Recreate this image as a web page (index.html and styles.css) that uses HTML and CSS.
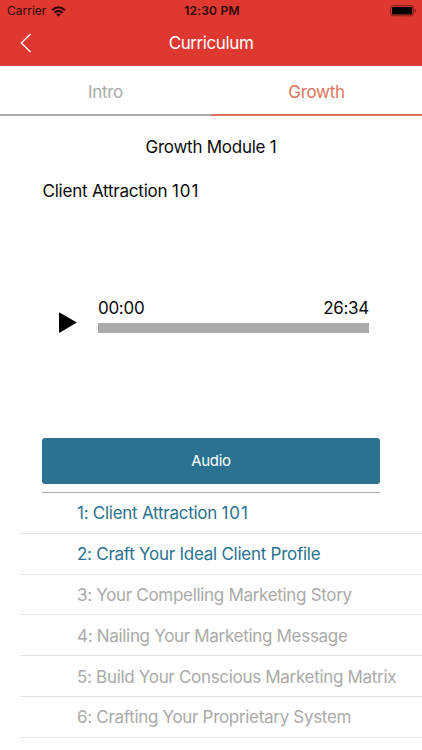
FILE: index.html
```html
<!DOCTYPE html>
<html lang="en">
<head>
<meta charset="utf-8">
<title>Curriculum</title>
<link rel="stylesheet" href="styles.css">
</head>
<body>
<header class="header">
  <div class="status">
    <div class="carrier"><span>Carrier</span>
      <svg width="15" height="11" viewBox="0 0 15 11" fill="none" stroke="#2a0807" stroke-width="2"><path d="M1 4.2Q7.5-1.7 14 4.2"/><path d="M3.4 6.7Q7.5 3 11.6 6.7"/><path d="M5.2 8.3Q7.5 6.5 9.8 8.3L7.5 10.7Z" fill="#2a0807" stroke="none"/></svg>
    </div>
    <span class="clock">12:30 PM</span>
    <svg class="battery" width="27" height="12" viewBox="0 0 27 12"><rect x=".6" y=".6" width="23" height="10.2" rx="2.4" fill="none" stroke="#7c1d1a"/><rect x="2" y="2" width="20.2" height="7.4" rx="1" fill="#000"/><path d="M25 4v3.6q1.3-.5 1.3-1.8T25 4Z" fill="#7c1d1a"/></svg>
  </div>
  <div class="nav">
    <svg class="back" width="12" height="20" viewBox="0 0 12 20" fill="none" stroke="#fff" stroke-width="1.3"><path d="M10.5 1L1.3 10l9.2 9"/></svg>
    <h1 class="title">Curriculum</h1>
  </div>
</header>
<nav class="tabs">
  <div class="tab"><span>Intro</span></div>
  <div class="tab active"><span>Growth</span></div>
</nav>
<main>
  <h2 class="module">Growth Module 1</h2>
  <p class="lesson">Client Attraction <span class="figures">101</span></p>
  <section class="player">
    <svg class="play" width="19" height="22" viewBox="0 0 19 22"><path d="M1 1.2Q1 .2 2 .8L18 9.9Q19 10.5 18 11.1L2 20.4Q1 21 1 20Z" fill="#000"/></svg>
    <div class="track">
      <div class="times"><span>00:00</span><span>26:34</span></div>
      <div class="bar"></div>
    </div>
  </section>
  <div class="audio"><span>Audio</span></div>
  <div class="rule"></div>
  <ol class="list">
    <li class="open"><span>1: Client Attraction <span class="figures">101</span></span></li>
    <li class="open"><span>2: Craft Your Ideal Client Profile</span></li>
    <li><span>3: Your Compelling Marketing Story</span></li>
    <li><span>4: Nailing Your Marketing Message</span></li>
    <li><span>5: Build Your Conscious Marketing Matrix</span></li>
    <li><span>6: Crafting Your Proprietary System</span></li>
  </ol>
</main>
</body>
</html>
```
FILE: styles.css
```css
* { box-sizing: border-box; }
body {
  margin: 0;
  height: 750px;
  overflow: hidden;
  background: #fff;
  color: #0a0a0a;
  font: 17px/22px Inter, "Liberation Sans", sans-serif;
  letter-spacing: -0.29px;
  white-space: nowrap;
}
h1, h2, p, ol { margin: 0; padding: 0; font-size: inherit; font-weight: 400; }
.header { height: 66px; background: #df3831; border-bottom: 1px solid #d2453f; }
.status {
  display: grid;
  grid-template-columns: 1fr auto 1fr;
  align-items: center;
  height: 22px;
  padding: 0 5px 0 7px;
  color: #2a0807;
  font-size: 12px;
  letter-spacing: 0;
}
.carrier { display: flex; align-items: center; gap: 5px; }
.clock { font-weight: 600; letter-spacing: 0.2px; }
.battery { justify-self: end; }
.nav {
  display: grid;
  grid-template-columns: 60px 1fr 60px;
  align-items: center;
  height: 42px;
}
.back { margin-left: 20px; }
.title { color: #fff; text-align: center; letter-spacing: -0.4px; }
.tabs { display: flex; height: 50px; letter-spacing: -0.3px; }
.tab {
  display: flex;
  align-items: center;
  justify-content: center;
  width: 50%;
  padding-top: 3px;
  border-bottom: 2px solid #aaa;
  color: #aaa;
}
.active { color: #df745c; border-color: #df745c; }
.module { margin-top: 20px; text-align: center; letter-spacing: -0.25px; }
.lesson { margin: 22px 0 0 42.5px; letter-spacing: -0.22px; }
.figures { letter-spacing: 0.9px; }
.player { display: flex; margin: 95px 53px 0 58px; }
.play { margin-top: 15px; }
.track { flex: 1; margin-left: 21px; }
.times { display: flex; justify-content: space-between; height: 26px; }
.bar { height: 10px; background: #aaa; }
.audio {
  display: flex;
  align-items: center;
  justify-content: center;
  height: 46px;
  margin: 104px 42px 0;
  border-radius: 3px;
  background: #2b7291;
  color: #fff;
  font-size: 15px;
}
.rule { height: 1px; margin: 8px 42px 0; background: #a5adaa; }
.list { list-style: none; color: #aaa; letter-spacing: -0.31px; }
.list li {
  display: flex;
  align-items: center;
  height: 40.8px;
  margin-left: 20px;
  padding: 1.2px 0 0 57px;
  border-bottom: 1px solid #e4e4e4;
}
.list .open { color: #2b7291; letter-spacing: -0.26px; }
```
